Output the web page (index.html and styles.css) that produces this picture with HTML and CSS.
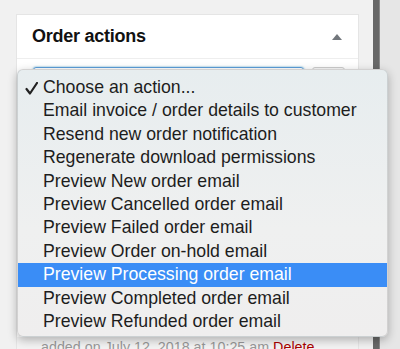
FILE: index.html
```html
<!DOCTYPE html>
<html lang="en">
<head>
  <meta charset="UTF-8" />
  <meta name="viewport" content="width=device-width, initial-scale=1.0"/>
  <title>Order actions</title>
  <link rel="stylesheet" href="styles.css">
</head>
<body>

  <div class="screen">
    <div class="main">
      <div class="postbox">
        <div class="postbox-header">
          <h2>Order actions</h2>
          <span class="toggle"></span>
        </div>
        <div class="inside">
          <div class="action-row">
            <div class="select-box"></div>
            <div class="go-btn"></div>
          </div>
          <div class="note"></div>
          <p class="note-meta">added on July 12, 2018 at 10:25 am <a class="delete" href="#">Delete</a></p>
        </div>
      </div>
    </div>
    <div class="divider"></div>
    <div class="sidebar"></div>
  </div>

  <ul class="action-menu">
    <li class="checked">
      <svg class="check" width="13" height="13" viewBox="0 0 13 13"><polyline points="1.5,7 5,11.5 12,1" fill="none" stroke="#222" stroke-width="2.2" stroke-linecap="round" stroke-linejoin="round"/></svg>
      Choose an action...
    </li>
    <li>Email invoice / order details to customer</li>
    <li>Resend new order notification</li>
    <li>Regenerate download permissions</li>
    <li>Preview New order email</li>
    <li>Preview Cancelled order email</li>
    <li>Preview Failed order email</li>
    <li>Preview Order on-hold email</li>
    <li class="active">Preview Processing order email</li>
    <li>Preview Completed order email</li>
    <li>Preview Refunded order email</li>
  </ul>

</body>
</html>
```

FILE: styles.css
```css
* { margin: 0; padding: 0; box-sizing: border-box; }
body {
  font-family: 'Liberation Sans', Arial, sans-serif;
  background: #f1f1f1;
  color: #23282d;
}
.screen {
  display: flex;
  height: 349px;
  overflow: hidden;
}
.main {
  width: 373px;
  padding: 14px 14px 0 16px;
}
.postbox {
  background: #fff;
  border: 1px solid #e5e5e5;
  border-bottom: none;
  height: 100%;
}
.postbox-header {
  height: 44px;
  display: flex;
  align-items: center;
  justify-content: space-between;
  padding: 0 16px 0 15px;
  border-bottom: 1px solid #eee;
}
.postbox-header h2 {
  font-size: 18px;
  font-weight: bold;
  letter-spacing: -0.25px;
  color: #111;
}
.toggle {
  width: 0;
  height: 0;
  border-left: 5px solid transparent;
  border-right: 5px solid transparent;
  border-bottom: 6px solid #72777c;
}
.inside {
  padding: 8px 0 0 0;
}
.action-row {
  display: flex;
  gap: 8px;
  padding: 0 13px 0 16px;
  height: 28px;
}
.select-box {
  flex: 1;
  border: 1px solid #5b9dd9;
  border-radius: 3px;
  box-shadow: 0 0 2px rgba(30,140,190,0.8);
}
.go-btn {
  width: 33px;
  background: #f7f7f7;
  border: 1px solid #ccc;
  border-radius: 3px;
}
.note {
  height: 242px;
}
.note-meta {
  background: #f3f3f3;
  padding: 0 16px 0 24px;
  font-size: 14.3px;
  line-height: 20px;
  color: #999;
}
.delete {
  color: #a00;
  text-decoration: none;
}
.divider {
  width: 7px;
  background: #686868;
  border-right: 1px solid #8a8a8a;
}
.sidebar {
  flex: 1;
  background: #e6e6e6;
}
.action-menu {
  position: absolute;
  left: 17px;
  top: 69px;
  width: 371px;
  height: 268px;
  padding: 6px 0;
  list-style: none;
  background: linear-gradient(#e7edef, #eff0f0 60%, #efeeee);
  border: 1px solid rgba(0,0,0,0.12);
  border-radius: 6px;
  box-shadow: 0 3px 10px rgba(0,0,0,0.28);
  overflow: hidden;
}
.action-menu li {
  position: relative;
  height: 23.4px;
  line-height: 23.4px;
  padding-left: 25px;
  font-size: 17.7px;
  color: #1d1d1d;
  white-space: nowrap;
}
.action-menu li.active {
  background: #3a8df6;
  color: #fff;
}
.check {
  position: absolute;
  left: 7px;
  top: 6px;
}
```
